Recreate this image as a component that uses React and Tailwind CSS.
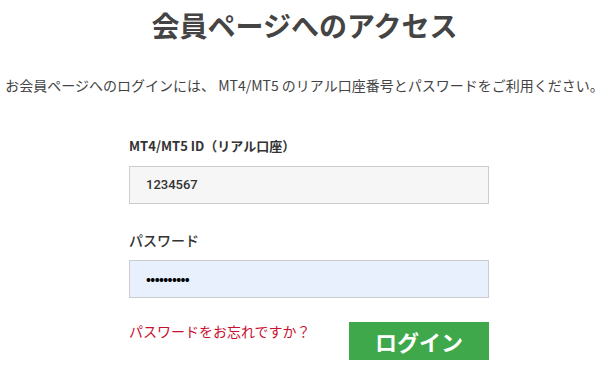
export default function App() {
  const jp = { fontFamily: '"Noto Sans CJK JP", "Noto Sans", sans-serif' };
  return (
    <div className="w-[609px] h-[369px] bg-white text-[#444] overflow-hidden" style={jp}>
      <h1 className="pt-[4px] text-center text-[28px] font-bold leading-[42px] text-[#444]">
        会員ページへのアクセス
      </h1>
      <p className="mt-[29px] text-center text-[14px] leading-[20px] text-[#444] whitespace-nowrap">
        お会員ページへのログインには、 MT4/MT5 のリアル口座番号とパスワードをご利用ください。
      </p>
      <div className="ml-[129px] w-[360px] mt-[41px] flex flex-col">
        <label className="text-[13px] font-bold leading-[20px] text-[#333]">
          MT4/MT5 ID（リアル口座）
        </label>
        <div className="mt-[10px] h-[38px] border border-[#ccc] bg-[#f6f6f6] flex items-center pl-[16px] text-[13px] font-medium text-[#333]" style={{ fontFamily: 'Roboto, "Noto Sans CJK JP", sans-serif' }}>
          1234567
        </div>
        <label className="mt-[26px] text-[14px] font-medium leading-[20px] text-[#333]">
          パスワード
        </label>
        <div className="mt-[10px] h-[38px] border border-[#ccc] bg-[#e8f0fe] flex items-center pl-[16px] text-[13px] font-bold text-black tracking-[-0.6px]">
          ••••••••••
        </div>
        <div className="mt-[23px] flex items-start justify-between">
          <a className="text-[14px] leading-[20px] text-[#c8102e]">パスワードをお忘れですか？</a>
          <button className="mt-[1px] w-[140px] h-[38px] bg-[#3ea84a] text-white text-[22px] font-bold flex items-center justify-center">
            ログイン
          </button>
        </div>
      </div>
    </div>
  );
}
